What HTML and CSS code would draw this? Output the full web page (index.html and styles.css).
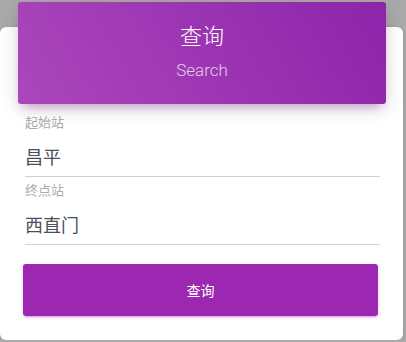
FILE: index.html
```html
<!DOCTYPE html>
<html lang="zh-CN">
<head>
    <meta charset="UTF-8">
    <meta name="viewport" content="width=device-width, initial-scale=1.0">
    <title>查询</title>
    <link rel="stylesheet" href="styles.css">
</head>
<body>
    <div class="card">
        <div class="card-header">
            <h4 class="card-title">查询</h4>
            <p class="card-sub">Search</p>
        </div>
        <form class="card-body">
            <div class="form-group">
                <label>起始站</label>
                <input type="text" name="from" value="昌平">
            </div>
            <div class="form-group">
                <label>终点站</label>
                <input type="text" name="to" value="西直门">
            </div>
            <button type="button" class="btn">查询</button>
        </form>
    </div>
</body>
</html>
```

FILE: styles.css
```css
body { margin: 0; background: #aaaaaa; font-family: Roboto, "Noto Sans CJK SC", sans-serif; }
.card { margin-top: 27px; width: 403px; height: 313px; box-sizing: border-box; background: #fff; border-radius: 6px; box-shadow: 0 1px 4px rgba(0,0,0,.14); }
.card-header { margin: 0 17px 0 18px; position: relative; top: -25px; height: 102px; box-sizing: border-box; padding-top: 20px; border-radius: 3px; text-align: center; color: #fff; background: linear-gradient(60deg, #ab47bc, #8e24aa); box-shadow: 0 4px 20px 0 rgba(0,0,0,.14), 0 7px 10px -5px rgba(156,39,176,.4); }
.card-title { margin: 0; font-size: 22px; font-weight: 300; line-height: 30px; }
.card-sub { margin: 6px 0 0; font-size: 17px; font-weight: 300; line-height: 24px; color: rgba(255,255,255,.75); }
.card-body { margin-top: -14px; padding: 0 23px 24px 25px; }
.form-group { display: flex; flex-direction: column; }
.form-group + .form-group { margin-top: 6px; }
label { font-size: 13px; line-height: 15px; color: #aaa; }
input { box-sizing: border-box; height: 38px; margin-top: 9px; padding: 0 0 3px; border: none; border-bottom: 1px solid #d2d2d2; font-family: inherit; font-size: 18px; color: #495057; background: transparent; outline: none; }
.btn { display: block; width: 355px; height: 52px; margin: 19px 0 0 -2px; border: none; border-radius: 3px; background: #9c27b0; color: #fff; font-family: inherit; font-size: 14px; font-weight: 400; box-shadow: 0 2px 2px 0 rgba(156,39,176,.14), 0 3px 1px -2px rgba(156,39,176,.2), 0 1px 5px 0 rgba(156,39,176,.12); cursor: pointer; }
```
